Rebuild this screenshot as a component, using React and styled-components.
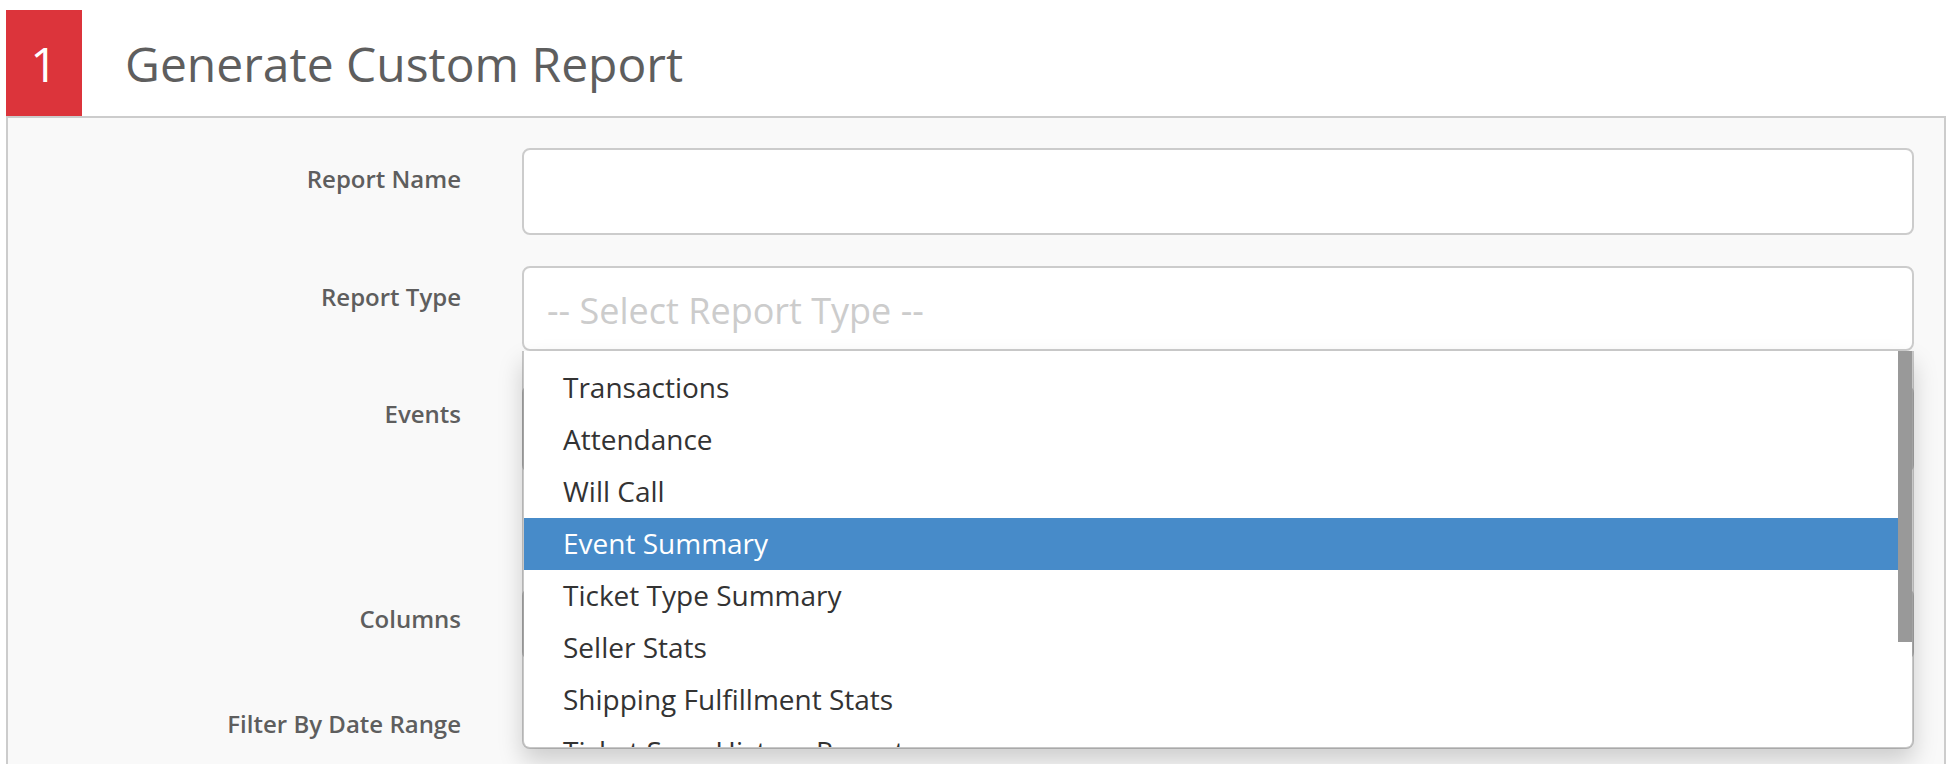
import React from 'react'
import styled, { createGlobalStyle } from 'styled-components'

const GlobalStyle = createGlobalStyle`
  html, body {
    margin: 0;
    padding: 0;
    height: 764px;
    overflow: hidden;
    background: #fff;
    font-family: "Open Sans", "Liberation Sans", sans-serif;
  }
`

const Page = styled.div`
  padding: 10px 8px 0 6px;
`

const Header = styled.div`
  display: flex;
  align-items: center;
  height: 106px;
`

const StepBadge = styled.div`
  width: 76px;
  height: 106px;
  background: #dc343b;
  color: #fff;
  font-size: 48px;
  display: flex;
  align-items: center;
  justify-content: center;
`

const Title = styled.h1`
  margin: 0 0 0 43px;
  font-size: 48px;
  font-weight: 400;
  color: #5e5e5e;
`

const Panel = styled.div`
  border: 2px solid #ccc;
  background: #f9f9f9;
  padding: 30px 30px 0 0;
  height: 700px;
  box-sizing: border-box;
`

const Row = styled.div`
  display: flex;
  gap: 61px;
  margin-bottom: ${p => p.$gap}px;
`

const Label = styled.label`
  width: 453px;
  flex: none;
  text-align: right;
  font-size: 24px;
  line-height: 33px;
  font-weight: 600;
  color: #5e5e5e;
  padding-top: ${p => p.$top}px;
`

const Field = styled.div`
  position: relative;
  flex: 1;
`

const Input = styled.div`
  box-sizing: border-box;
  height: ${p => p.$height}px;
  background: #fff;
  border: 2px solid #ccc;
  border-radius: 8px;
  padding-left: 23px;
  font-size: 36px;
  line-height: 85px;
  color: #ccc;
`

const Dropdown = styled.ul`
  position: absolute;
  z-index: 10;
  top: 85px;
  left: 0;
  right: 0;
  height: 398px;
  box-sizing: border-box;
  margin: 0;
  padding: 11px 0 0;
  list-style: none;
  overflow: hidden;
  background: #fff;
  background-clip: padding-box;
  border: 2px solid rgba(0, 0, 0, 0.2);
  border-top: 0;
  border-radius: 0 0 8px 8px;
  box-shadow: 0 12px 24px rgba(0, 0, 0, 0.175);
`

const Option = styled.li`
  height: 52px;
  line-height: 50px;
  padding-left: 39px;
  font-size: 28px;
  color: ${p => (p.$active ? '#fff' : '#333')};
  background: ${p => (p.$active ? '#478bc9' : 'transparent')};
`

const ScrollThumb = styled.div`
  position: absolute;
  top: 0;
  right: 0;
  width: 14px;
  height: 291px;
  background: #999;
`

const options = [
  'Transactions',
  'Attendance',
  'Will Call',
  'Event Summary',
  'Ticket Type Summary',
  'Seller Stats',
  'Shipping Fulfillment Stats',
  'Ticket Scan History Report',
]

export default function App() {
  return (
    <Page>
      <GlobalStyle />
      <Header>
        <StepBadge>1</StepBadge>
        <Title>Generate Custom Report</Title>
      </Header>
      <Panel>
        <Row $gap={31}>
          <Label $top={14}>Report Name</Label>
          <Field>
            <Input $height={87} />
          </Field>
        </Row>
        <Row $gap={34}>
          <Label $top={14}>Report Type</Label>
          <Field>
            <Input $height={85}>-- Select Report Type --</Input>
            <Dropdown>
              {options.map(o => (
                <Option key={o} $active={o === 'Event Summary'}>{o}</Option>
              ))}
              <ScrollThumb />
            </Dropdown>
          </Field>
        </Row>
        <Row $gap={115}>
          <Label $top={12}>Events</Label>
          <Field>
            <Input $height={88} />
          </Field>
        </Row>
        <Row $gap={35}>
          <Label $top={14}>Columns</Label>
          <Field>
            <Input $height={72} />
          </Field>
        </Row>
        <Row $gap={0}>
          <Label $top={12}>Filter By Date Range</Label>
        </Row>
      </Panel>
    </Page>
  )
}
